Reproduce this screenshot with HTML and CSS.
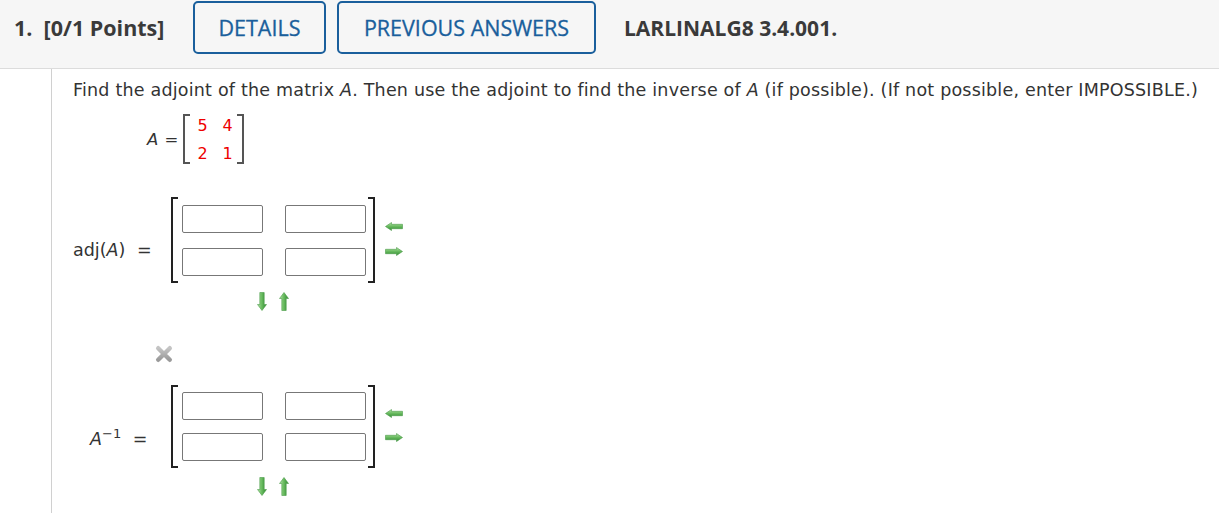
FILE: index.html
```html
<!DOCTYPE html>
<html>
<head>
<meta charset="utf-8">
<link rel="stylesheet" href="styles.css">
</head>
<body>
<svg width="0" height="0" class="defs">
  <defs>
    <linearGradient id="gh" x1="0" y1="0" x2="0" y2="1">
      <stop offset="0" stop-color="#b6e4aa"/>
      <stop offset="0.45" stop-color="#6cbd62"/>
      <stop offset="1" stop-color="#2e8a30"/>
    </linearGradient>
    <linearGradient id="gv" x1="0" y1="0" x2="1" y2="0">
      <stop offset="0" stop-color="#b6e4aa"/>
      <stop offset="0.45" stop-color="#6cbd62"/>
      <stop offset="1" stop-color="#2e8a30"/>
    </linearGradient>
    <linearGradient id="gx" x1="0" y1="0" x2="0" y2="1">
      <stop offset="0" stop-color="#c4c4c4"/>
      <stop offset="1" stop-color="#9a9a9a"/>
    </linearGradient>
  </defs>
</svg>
<header class="qhead">
  <span class="qnum">1.&nbsp; [0/1 Points]</span>
  <button class="qbtn btn-details">DETAILS</button>
  <button class="qbtn btn-prev">PREVIOUS ANSWERS</button>
  <span class="qcode">LARLINALG8 3.4.001.</span>
</header>
<main class="qbody">
  <p class="prompt">Find the adjoint of the matrix <i>A</i>. Then use the adjoint to find the inverse of <i>A</i> (if possible). (If not possible, enter IMPOSSIBLE.)</p>
  <div class="given">
    <span class="given-lbl"><i>A</i> <span class="eq">=</span></span>
    <div class="gmat">
      <span class="gcell">5</span><span class="gcell">4</span>
      <span class="gcell">2</span><span class="gcell">1</span>
    </div>
  </div>

  <div class="mrow mrow-adj">
    <span class="mlbl lbl-adj">adj(<i>A</i>) <span class="eq">=</span></span>
    <div class="mblock">
      <div class="mwrap">
        <div class="mat">
          <input class="cell"><input class="cell">
          <input class="cell"><input class="cell">
        </div>
        <div class="harrows">
          <svg width="18" height="9" viewBox="0 0 18 9"><path d="M0.5 4.5 L6.5 0.5 L6.5 2.3 L17.5 2.3 L17.5 6.7 L6.5 6.7 L6.5 8.5 Z" fill="url(#gh)" stroke="#4a9a48" stroke-width="0.6"/></svg>
          <svg width="18" height="9" viewBox="0 0 18 9"><path d="M17.5 4.5 L11.5 0.5 L11.5 2.3 L0.5 2.3 L0.5 6.7 L11.5 6.7 L11.5 8.5 Z" fill="url(#gh)" stroke="#4a9a48" stroke-width="0.6"/></svg>
        </div>
      </div>
      <div class="varrows">
        <svg width="10" height="19" viewBox="0 0 10 19"><path d="M5 18.5 L0.5 12.5 L2.8 12.5 L2.8 0.5 L7.2 0.5 L7.2 12.5 L9.5 12.5 Z" fill="url(#gv)" stroke="#4a9a48" stroke-width="0.6"/></svg>
        <svg width="10" height="19" viewBox="0 0 10 19"><path d="M5 0.5 L0.5 6.5 L2.8 6.5 L2.8 18.5 L7.2 18.5 L7.2 6.5 L9.5 6.5 Z" fill="url(#gv)" stroke="#4a9a48" stroke-width="0.6"/></svg>
      </div>
    </div>
  </div>

  <div class="xmark">
    <svg width="18" height="18" viewBox="0 0 18 18"><path d="M3.2 3.2 L14.8 14.8 M14.8 3.2 L3.2 14.8" stroke="url(#gx)" stroke-width="4.4" stroke-linecap="round"/></svg>
  </div>

  <div class="mrow mrow-inv">
    <span class="mlbl lbl-inv"><i>A</i><sup>&minus;1</sup> <span class="eq">=</span></span>
    <div class="mblock">
      <div class="mwrap">
        <div class="mat mat-inv">
          <input class="cell"><input class="cell">
          <input class="cell"><input class="cell">
        </div>
        <div class="harrows harrows-inv">
          <svg width="18" height="9" viewBox="0 0 18 9"><path d="M0.5 4.5 L6.5 0.5 L6.5 2.3 L17.5 2.3 L17.5 6.7 L6.5 6.7 L6.5 8.5 Z" fill="url(#gh)" stroke="#4a9a48" stroke-width="0.6"/></svg>
          <svg width="18" height="9" viewBox="0 0 18 9"><path d="M17.5 4.5 L11.5 0.5 L11.5 2.3 L0.5 2.3 L0.5 6.7 L11.5 6.7 L11.5 8.5 Z" fill="url(#gh)" stroke="#4a9a48" stroke-width="0.6"/></svg>
        </div>
      </div>
      <div class="varrows">
        <svg width="10" height="19" viewBox="0 0 10 19"><path d="M5 18.5 L0.5 12.5 L2.8 12.5 L2.8 0.5 L7.2 0.5 L7.2 12.5 L9.5 12.5 Z" fill="url(#gv)" stroke="#4a9a48" stroke-width="0.6"/></svg>
        <svg width="10" height="19" viewBox="0 0 10 19"><path d="M5 0.5 L0.5 6.5 L2.8 6.5 L2.8 18.5 L7.2 18.5 L7.2 6.5 L9.5 6.5 Z" fill="url(#gv)" stroke="#4a9a48" stroke-width="0.6"/></svg>
      </div>
    </div>
  </div>
</main>
</body>
</html>
```
FILE: styles.css
```css
* { box-sizing: border-box; }
html, body { margin: 0; padding: 0; background: #fff; }
body { font-family: "DejaVu Sans", Verdana, sans-serif; color: #333; overflow: hidden; height: 513px; }
.defs { position: absolute; }

.qhead {
  height: 69px;
  background: #f6f6f6;
  border-bottom: 1px solid #dcdcdc;
  display: flex;
  align-items: flex-start;
  padding-left: 14px;
  font-family: "Open Sans", sans-serif;
}
.qnum {
  font-weight: 700;
  font-size: 21.5px;
  line-height: 28px;
  color: #3a3a3a;
  margin-top: 14px;
  width: 179px;
  white-space: nowrap;
}
.qbtn {
  font-family: "Open Sans", sans-serif;
  font-size: 21.5px;
  font-weight: 500;
  color: #1a5f9c;
  -webkit-text-stroke: 0.3px #1a5f9c;
  background: #f6f6f6;
  border: 2px solid #1a5f9c;
  border-radius: 5px;
  height: 53px;
  margin-top: 1px;
  padding: 0;
}
.btn-details { width: 133px; }
.btn-prev { width: 259px; margin-left: 11px; }
.qcode {
  font-weight: 700;
  font-size: 21px;
  line-height: 28px;
  color: #3a3a3a;
  margin-top: 14px;
  margin-left: 28px;
  white-space: nowrap;
}

.qbody {
  margin-left: 51px;
  border-left: 1px solid #d0d0d0;
  height: 444px;
  padding-left: 21px;
  padding-top: 9px;
}
.prompt {
  margin: 0;
  font-size: 17.5px;
  letter-spacing: 0.2px;
  line-height: 24px;
  color: #333;
  white-space: nowrap;
}
.given {
  display: flex;
  align-items: center;
  margin-top: 12px;
  margin-left: 74px;
}
.given-lbl { font-size: 16.5px; width: 36px; white-space: nowrap; }
.given-lbl .eq { margin-left: 1px; }
.gmat {
  display: grid;
  grid-template-columns: 15px 15px;
  column-gap: 10px;
  row-gap: 8px;
  padding: 2px 7px 0 10px;
  border-left: 2px solid #555;
  border-right: 2px solid #555;
  position: relative;
}
.gmat::before, .gmat::after {
  content: "";
  position: absolute;
  top: 0; bottom: 0;
  width: 5px;
  border-top: 2px solid #555;
  border-bottom: 2px solid #555;
}
.gmat::before { left: 0; }
.gmat::after { right: 0; }
.gcell { color: #e00; font-size: 16px; line-height: 20px; text-align: center; }

.mrow { display: flex; align-items: flex-start; }
.mrow-adj { margin-top: 33px; }
.mrow-inv { margin-top: 22px; }
.mlbl { font-size: 17.5px; line-height: 20px; white-space: nowrap; }
.mlbl .eq { margin-left: 6px; }
.lbl-adj { width: 98px; margin-top: 43px; }
.lbl-inv { width: 98px; margin-top: 44px; padding-left: 17px; }
.lbl-inv sup { font-size: 13px; line-height: 0; vertical-align: 7px; }

.mblock { display: flex; flex-direction: column; }
.mwrap { display: flex; align-items: flex-start; }
.mat {
  display: grid;
  grid-template-columns: 81px 81px;
  column-gap: 22px;
  row-gap: 15px;
  padding: 8px 7px 7px 9px;
  position: relative;
  border-left: 2px solid #222;
  border-right: 2px solid #222;
}
.mat-inv { row-gap: 13px; padding: 7px 7px 7px 9px; }
.mat::before, .mat::after {
  content: "";
  position: absolute;
  top: 0; bottom: 0;
  width: 5px;
  border-top: 2px solid #222;
  border-bottom: 2px solid #222;
}
.mat::before { left: 0; }
.mat::after { right: 0; }
.cell {
  width: 81px;
  height: 28px;
  border: 1px solid #777;
  border-radius: 2px;
  background: #fff;
  margin: 0;
  padding: 0;
}
.harrows {
  display: flex;
  flex-direction: column;
  gap: 16px;
  margin-left: 10px;
  margin-top: 25px;
}
.harrows-inv { margin-top: 24px; gap: 15px; }
.harrows svg { display: block; }
.varrows {
  display: flex;
  gap: 12px;
  margin-left: 86px;
  margin-top: 9px;
}
.varrows svg { display: block; }

.xmark {
  margin-left: 82px;
  margin-top: 34px;
  height: 18px;
}
.xmark svg { display: block; }
```
